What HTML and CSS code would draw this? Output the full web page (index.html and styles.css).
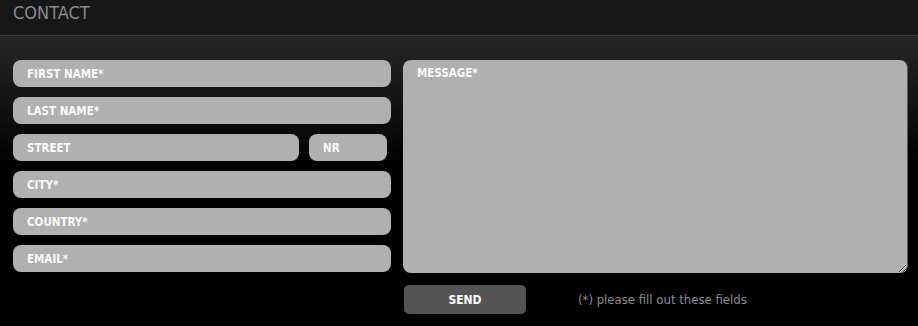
FILE: index.html
```html
<!DOCTYPE html>
<html>
<head>
<meta charset="utf-8">
<link rel="stylesheet" href="styles.css">
</head>
<body>
<header class="topbar"><h1 class="title">CONTACT</h1></header>
<main class="content">
  <form class="form">
    <div class="left">
      <input class="field" type="text" placeholder="FIRST NAME*">
      <input class="field" type="text" placeholder="LAST NAME*">
      <div class="row">
        <input class="field street" type="text" placeholder="STREET">
        <input class="field nr" type="text" placeholder="NR">
      </div>
      <input class="field" type="text" placeholder="CITY*">
      <input class="field" type="text" placeholder="COUNTRY*">
      <input class="field" type="text" placeholder="EMAIL*">
    </div>
    <div class="right">
      <textarea class="message" placeholder="MESSAGE*"></textarea>
      <div class="actions">
        <button class="send" type="button">SEND</button>
        <span class="note">(*) please fill out these fields</span>
      </div>
    </div>
  </form>
</main>
</body>
</html>
```
FILE: styles.css
```css
html, body {
  margin: 0;
  padding: 0;
  height: 100%;
}
body {
  background: #000;
  font-family: "DejaVu Sans Condensed", "DejaVu Sans", sans-serif;
  overflow: hidden;
}
.topbar {
  height: 35px;
  background: #171717;
  border-bottom: 1px solid #3c3c3c;
  box-sizing: content-box;
}
.title {
  margin: 0;
  padding: 3px 0 0 13px;
  font-weight: normal;
  font-size: 18px;
  line-height: 20px;
  color: #8a8a8a;
}
.content {
  background: linear-gradient(to bottom, #262626 0px, #121212 70px, #000 130px, #000 100%);
  padding: 24px 10px 0 13px;
  height: 290px;
  box-sizing: border-box;
}
.form {
  display: flex;
  gap: 12px;
}
.left {
  width: 378px;
  display: flex;
  flex-direction: column;
  gap: 10px;
}
.row {
  display: flex;
  gap: 10px;
}
.field {
  display: block;
  width: 100%;
  height: 27px;
  box-sizing: border-box;
  border: none;
  border-radius: 8px;
  background: #b0b0b0;
  padding: 0 14px;
  font-family: inherit;
  font-weight: bold;
  font-size: 11.5px;
  color: #fff;
  outline: none;
}
.field::placeholder, .message::placeholder {
  color: #fafafa;
  opacity: 1;
}
.street { width: 286px; flex: none; }
.nr { width: 78px; flex: none; }
.right {
  width: 505px;
  display: flex;
  flex-direction: column;
}
.message {
  display: block;
  width: 505px;
  height: 213px;
  box-sizing: border-box;
  border: none;
  border-right: 1px solid #5a5a5a;
  border-radius: 8px;
  background: #b0b0b0;
  padding: 6px 14px;
  font-family: inherit;
  font-weight: bold;
  font-size: 11.5px;
  color: #fff;
  outline: none;
  resize: both;
}
.actions {
  display: flex;
  align-items: center;
  margin-top: 12px;
  padding-left: 1px;
}
.send {
  width: 122px;
  height: 29px;
  border: none;
  border-radius: 5px;
  background: #555;
  color: #fff;
  font-family: inherit;
  font-weight: bold;
  font-size: 12px;
  padding: 0;
}
.note {
  margin-left: 52px;
  font-size: 13px;
  color: #8c8c8c;
}
```
